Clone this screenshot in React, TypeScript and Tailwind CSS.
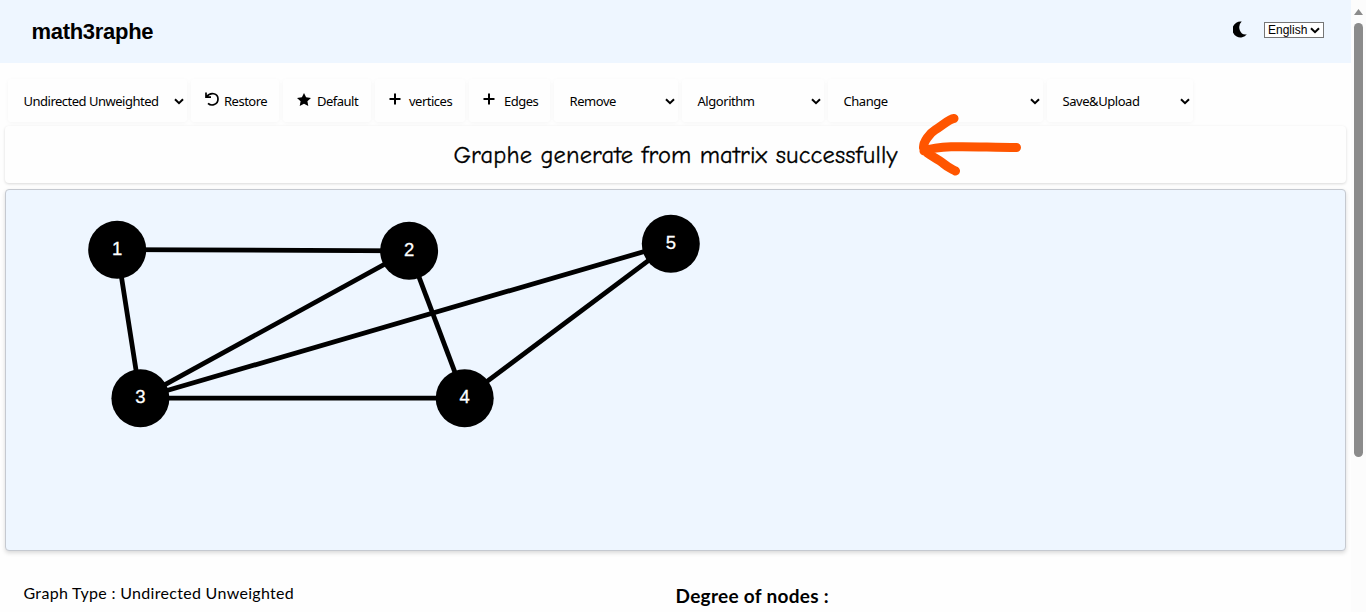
import React from "react";

const nodes = [
  { id: 1, x: 117.2, y: 249.7 },
  { id: 2, x: 409.1, y: 250.8 },
  { id: 3, x: 140.4, y: 398.2 },
  { id: 4, x: 464.7, y: 398.2 },
  { id: 5, x: 670.8, y: 243.8 },
];
const edges = [[1, 2], [1, 3], [2, 3], [2, 4], [3, 4], [3, 5], [4, 5]];

const Chevron = ({ className = "" }: { className?: string }) => (
  <svg className={className} width="10" height="7" viewBox="0 0 10 7" fill="none" stroke="#000" strokeWidth="2">
    <path d="M1 1.2 5 5.2 9 1.2" />
  </svg>
);

const box = "flex h-[43px] shrink-0 items-center rounded-[3px] bg-[#fefefe] shadow-[0_1px_4px_rgba(0,0,0,0.04)]";

function Picker({ label, width, spacing = "tracking-[-0.45px]" }: { label: string; width: string; spacing?: string }) {
  return (
    <div className={`${box} ${width} justify-between pl-[15.5px] pr-[3px]`}>
      <span className={`whitespace-nowrap pt-[2px] ${spacing}`}>{label}</span>
      <Chevron className="mt-px" />
    </div>
  );
}

function Action({ label, width, children }: { label: string; width: string; children: React.ReactNode }) {
  return (
    <button className={`${box} ${width}`}>
      {children}
      <span className="whitespace-nowrap pt-[2px] tracking-[-0.5px]">{label}</span>
    </button>
  );
}

const Plus = ({ className }: { className: string }) => (
  <svg className={className} width="12" height="12" viewBox="0 0 12 12" stroke="#000" strokeWidth="2">
    <path d="M6 .5v11M.5 6h11" />
  </svg>
);

export default function App() {
  return (
    <div className="flex h-[612px] w-[1366px] overflow-hidden bg-[#fefefe] text-black">
      <main className="flex w-[1351px] shrink-0 flex-col">
        <header className="flex h-[63px] shrink-0 items-center bg-[#eef6ff] pl-[31.5px] pr-[27px] font-['Liberation_Sans',sans-serif]">
          <h1 className="text-[22px] font-bold leading-none tracking-[-0.3px]">math3raphe</h1>
          <svg className="-mt-1 ml-auto mr-4" width="15" height="17" viewBox="0 0 15 17">
            <path d="M8.7 .6A8 8 0 1 0 13.8 13.3Q8.7 14.2 6.8 9.2Q5 4.2 8.7 .6Z" />
          </svg>
          <div className="-mt-[3px] flex h-4 w-[60px] items-center justify-between border border-[#767676] bg-white pl-[3px] pr-[3px] text-[12px] leading-none">
            <span>English</span>
            <Chevron />
          </div>
        </header>
        <nav className="mt-4 flex h-[43px] shrink-0 gap-1 pl-2 font-['Noto_Sans',sans-serif] text-[13px]">
          <Picker label="Undirected Unweighted" width="w-[179px]" spacing="tracking-[-0.5px]" />
          <Action label="Restore" width="w-[88px]">
            <svg className="-mt-1 ml-[14px] mr-[5px]" width="14" height="14" viewBox="0 0 14 14" fill="none" stroke="#000" strokeWidth="1.7">
              <path d="M1 .5v4.7h5M1.5 4.8C5.5-.4 13 1.2 13 7.1C13 12.8 6.4 14.6 3 11.3" />
            </svg>
          </Action>
          <Action label="Default" width="w-[88px]">
            <svg className="-mt-[3px] ml-[14px] mr-[6px]" width="14" height="13" viewBox="0 0 14 13">
              <path d="m7 0 2.1 4.3 4.9.6-3.6 3.4.9 4.7L7 10.7 2.7 13l.9-4.7L0 4.9l4.9-.6Z" />
            </svg>
          </Action>
          <Action label="vertices" width="w-[90px]"><Plus className="-mt-[4px] ml-[14px] mr-[8px]" /></Action>
          <Action label="Edges" width="w-[81px]"><Plus className="-mt-[4px] ml-[14px] mr-[9px]" /></Action>
          <Picker label="Remove" width="w-[124px]" />
          <Picker label="Algorithm" width="w-[142px]" />
          <Picker label="Change" width="w-[215px]" />
          <Picker label="Save&Upload" width="w-[146px]" />
        </nav>
        <section className="relative ml-[5px] mt-1 flex h-[57px] w-[1341px] shrink-0 items-center justify-center rounded-[4px] bg-[#fefefe] shadow-[0_1px_3px_rgba(0,0,0,0.15)]">
          <p className="whitespace-nowrap pt-[2px] font-['Comic_Sans_MS','Comic_Neue','Noto_Sans',sans-serif] text-[24.5px] tracking-[0.14px] [-webkit-text-stroke:0.3px_black]">Graphe generate from matrix successfully</p>
          <svg className="absolute -top-[14px] left-[911px]" width="110" height="66" viewBox="916 112 110 66" fill="none" stroke="#ff5500" strokeWidth="9" strokeLinecap="round" strokeLinejoin="round">
            <path d="M954 118.500C949 119 943 125 935 130C930 133 923 142 923.500 148C925 154 936 157 944 164C948 167.500 952 169 955.500 171M924 151C944 144 977 147.500 1016.500 147.500" />
          </svg>
        </section>
        <section className="ml-[5px] mt-[6px] h-[362px] w-[1341px] shrink-0 overflow-hidden rounded-[4px] border border-[#c5c9d0] bg-[#eef6ff] shadow-[0_2px_4px_rgba(0,0,0,0.15)]">
          <svg width="1339" height="360" viewBox="6 190 1339 360">
            {edges.map(([a, b]) => (
              <line key={`${a}-${b}`} x1={nodes[a - 1].x} y1={nodes[a - 1].y} x2={nodes[b - 1].x} y2={nodes[b - 1].y} stroke="#000" strokeWidth="4.8" />
            ))}
            {nodes.map((n) => (
              <g key={n.id}>
                <circle cx={n.x} cy={n.y} r="29" />
                <text x={n.x} y={n.y + 5.2} textAnchor="middle" fill="#fff" stroke="#fff" strokeWidth="0.3" className="font-['Liberation_Sans',sans-serif] text-[18.5px]">{n.id}</text>
              </g>
            ))}
          </svg>
        </section>
        <section className="flex font-['Lato',sans-serif]">
          <p className="mt-[30px] w-[652px] pl-[23.5px] text-[16px] leading-6 tracking-[0.31px]">Graph Type : Undirected Unweighted</p>
          <h2 className="mt-[33px] pl-[23.5px] text-[19px] font-bold leading-6 tracking-[0.3px]">Degree of nodes :</h2>
        </section>
      </main>
      <aside className="flex w-[15px] flex-col items-center bg-[#fcfcfc]">
        <svg className="mt-[9px] shrink-0" width="9" height="6" viewBox="0 0 9 6"><path d="M4.500 0 9 6H0Z" fill="#8b8b8b" /></svg>
        <div className="mt-2 h-[434px] w-[9px] shrink-0 rounded-full bg-[#8b8b8b]" />
      </aside>
    </div>
  );
}
